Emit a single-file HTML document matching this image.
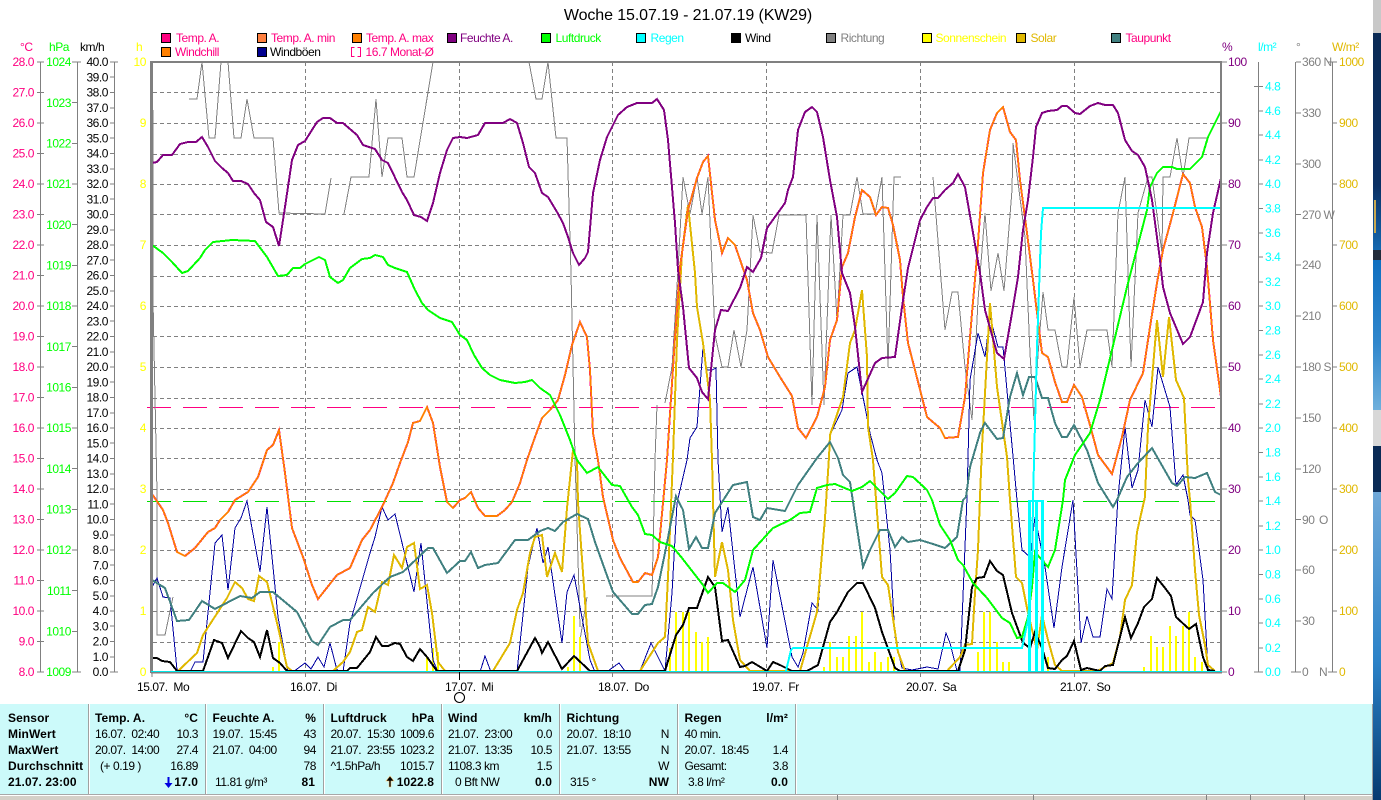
<!DOCTYPE html>
<html><head><meta charset="utf-8"><title>Woche 15.07.19 - 21.07.19 (KW29)</title>
<style>
html,body{margin:0;padding:0;background:#fff;overflow:hidden}
svg{display:block;font-family:"Liberation Sans",sans-serif;font-size:12px;letter-spacing:-.45px}
.l polyline,.l path,.c{shape-rendering:crispEdges}
polyline{fill:none}
.r{text-anchor:end}
.b{font-weight:bold;letter-spacing:.1px}
text{white-space:pre}
</style></head><body>
<svg width="1381" height="800" viewBox="0 0 1381 800" xmlns="http://www.w3.org/2000/svg">
<rect width="1381" height="800" fill="#fff"/>
<text x="688" y="20" text-anchor="middle" font-size="16" fill="#000" style="letter-spacing:-.1px">Woche 15.07.19 - 21.07.19 (KW29)</text>

<!-- legend -->
<g class="c" stroke="#000">
<rect x="161.5" y="33.5" width="9" height="9" fill="#ff0080"/><rect x="257.5" y="33.5" width="9" height="9" fill="#ff8040"/><rect x="352.5" y="33.5" width="9" height="9" fill="#ff8000"/><rect x="447.5" y="33.5" width="9" height="9" fill="#800080"/><rect x="541.5" y="33.5" width="9" height="9" fill="#00ff00"/><rect x="636.5" y="33.5" width="9" height="9" fill="#00ffff"/><rect x="731.5" y="33.5" width="9" height="9" fill="#000"/><rect x="826.5" y="33.5" width="9" height="9" fill="#808080"/><rect x="922.5" y="33.5" width="9" height="9" fill="#ffff00"/><rect x="1016.5" y="33.5" width="9" height="9" fill="#e0b800"/><rect x="1111.5" y="33.5" width="9" height="9" fill="#408080"/>
<rect x="161.5" y="47.5" width="9" height="9" fill="#ff8000"/><rect x="257.5" y="47.5" width="9" height="9" fill="#000090"/>
</g>
<path class="c" d="M354.5 47.5H351.5V56.5H354.5M357.5 47.5H360.5V56.5H357.5" fill="none" stroke="#ff0080"/>
<g>
<text x="176" y="42" fill="#ff0080">Temp. A.</text><text x="271" y="42" fill="#ff0080">Temp. A. min</text><text x="366" y="42" fill="#ff0080">Temp. A. max</text><text x="460" y="42" fill="#800080">Feuchte A.</text><text x="555.5" y="42" fill="#00ff00">Luftdruck</text><text x="650.5" y="42" fill="#00ffff">Regen</text><text x="745" y="42" fill="#000">Wind</text><text x="840.5" y="42" fill="#808080">Richtung</text><text x="935.5" y="42" fill="#ffff00">Sonnenschein</text><text x="1030.5" y="42" fill="#e0b800">Solar</text><text x="1125.5" y="42" fill="#ff0080">Taupunkt</text>
<text x="175" y="56" fill="#ff0080">Windchill</text><text x="270" y="56" fill="#000">Windböen</text><text x="365.5" y="56" fill="#ff0080">16.7 Monat-Ø</text>
</g>

<!-- units -->
<text x="20" y="51" fill="#ff0080">°C</text><text x="49" y="51" fill="#00ff00">hPa</text><text x="80" y="51" fill="#000">km/h</text><text x="136" y="51" fill="#ffff00">h</text>
<text x="1222" y="51" fill="#800080">%</text><text x="1258" y="51" fill="#00ffff">l/m²</text><text x="1296" y="51" fill="#808080">°</text><text x="1332" y="51" fill="#e0b800">W/m²</text>

<!-- left axes -->
<g class="l" fill="none" stroke="#808080">
<path stroke-width="1" d="M40.5 62V672M77.5 62V672M114.5 62V672"/>
<path stroke-width="1" d="M37 62h7M37 92.5h7M37 123h7M37 153.5h7M37 184h7M37 214.5h7M37 245h7M37 275.5h7M37 306h7M37 336.5h7M37 367h7M37 397.5h7M37 428h7M37 458.5h7M37 489h7M37 519.5h7M37 550h7M37 580.5h7M37 611h7M37 641.5h7M37 672h7"/>
<path stroke-width="1" d="M72 62h9M72 102.5h6M72 143.5h6M72 184h6M72 224.5h6M72 265.5h6M72 306h6M72 346.5h6M72 387.5h6M72 428h6M72 468.5h6M72 509.5h6M72 550h6M72 590.5h6M72 631.5h6M72 672h9"/>
<path stroke-width="1" d="M110 62h8M110 92.5h5M110 123h5M110 153.5h5M110 184h5M110 214.5h5M110 245h5M110 275.5h5M110 306h5M110 336.5h5M110 367h5M110 397.5h5M110 428h5M110 458.5h5M110 489h5M110 519.5h5M110 550h5M110 580.5h5M110 611h5M110 641.5h5M110 672h8M110 77h5M110 108h5M110 138h5M110 169h5M110 199h5M110 230h5M110 260h5M110 291h5M110 321h5M110 352h5M110 382h5M110 413h5M110 443h5M110 474h5M110 504h5M110 535h5M110 565h5M110 596h5M110 626h5M110 657h5"/>
</g>
<g class="r" fill="#ff0080">
<text x="34" y="66">28.0</text><text x="34" y="96.5">27.0</text><text x="34" y="127">26.0</text><text x="34" y="157.5">25.0</text><text x="34" y="188">24.0</text><text x="34" y="218.5">23.0</text><text x="34" y="249">22.0</text><text x="34" y="279.5">21.0</text><text x="34" y="310">20.0</text><text x="34" y="340.5">19.0</text><text x="34" y="371">18.0</text><text x="34" y="401.5">17.0</text><text x="34" y="432">16.0</text><text x="34" y="462.5">15.0</text><text x="34" y="493">14.0</text><text x="34" y="523.5">13.0</text><text x="34" y="554">12.0</text><text x="34" y="584.5">11.0</text><text x="34" y="615">10.0</text><text x="34" y="645.5">9.0</text><text x="34" y="676">8.0</text>
</g>
<g class="r" fill="#00ff00">
<text x="71" y="66">1024</text><text x="71" y="107">1023</text><text x="71" y="147.5">1022</text><text x="71" y="188">1021</text><text x="71" y="229">1020</text><text x="71" y="269.5">1019</text><text x="71" y="310">1018</text><text x="71" y="351">1017</text><text x="71" y="391.5">1016</text><text x="71" y="432">1015</text><text x="71" y="473">1014</text><text x="71" y="513.5">1013</text><text x="71" y="554">1012</text><text x="71" y="595">1011</text><text x="71" y="635.5">1010</text><text x="71" y="676">1009</text>
</g>
<g class="r" fill="#000">
<text x="108" y="66">40.0</text><text x="108" y="81.25">39.0</text><text x="108" y="96.5">38.0</text><text x="108" y="111.75">37.0</text><text x="108" y="127">36.0</text><text x="108" y="142.25">35.0</text><text x="108" y="157.5">34.0</text><text x="108" y="172.75">33.0</text><text x="108" y="188">32.0</text><text x="108" y="203.25">31.0</text><text x="108" y="218.5">30.0</text><text x="108" y="233.75">29.0</text><text x="108" y="249">28.0</text><text x="108" y="264.25">27.0</text><text x="108" y="279.5">26.0</text><text x="108" y="294.75">25.0</text><text x="108" y="310">24.0</text><text x="108" y="325.25">23.0</text><text x="108" y="340.5">22.0</text><text x="108" y="355.75">21.0</text><text x="108" y="371">20.0</text><text x="108" y="386.25">19.0</text><text x="108" y="401.5">18.0</text><text x="108" y="416.75">17.0</text><text x="108" y="432">16.0</text><text x="108" y="447.25">15.0</text><text x="108" y="462.5">14.0</text><text x="108" y="477.75">13.0</text><text x="108" y="493">12.0</text><text x="108" y="508.25">11.0</text><text x="108" y="523.5">10.0</text><text x="108" y="538.75">9.0</text><text x="108" y="554">8.0</text><text x="108" y="569.25">7.0</text><text x="108" y="584.5">6.0</text><text x="108" y="599.75">5.0</text><text x="108" y="615">4.0</text><text x="108" y="630.25">3.0</text><text x="108" y="645.5">2.0</text><text x="108" y="660.75">1.0</text><text x="108" y="676">0.0</text>
</g>
<g class="r" fill="#ffff00">
<text x="146" y="66">10</text><text x="146" y="127">9</text><text x="146" y="188">8</text><text x="146" y="249">7</text><text x="146" y="310">6</text><text x="146" y="371">5</text><text x="146" y="432">4</text><text x="146" y="493">3</text><text x="146" y="554">2</text><text x="146" y="615">1</text><text x="146" y="676">0</text>
</g>

<!-- grid -->
<g class="l" fill="none" stroke="#808080">
<path stroke-dasharray="4 3" d="M153 92.5H1221M153 123.5H1221M153 154.5H1221M153 184.5H1221M153 214.5H1221M153 245.5H1221M153 276.5H1221M153 306.5H1221M153 336.5H1221M153 367.5H1221M153 398.5H1221M153 428.5H1221M153 458.5H1221M153 489.5H1221M153 520.5H1221M153 550.5H1221M153 580.5H1221M153 611.5H1221M153 642.5H1221"/>
<path stroke-dasharray="4 3" d="M305.5 62V672M459.5 62V672M612.5 62V672M766.5 62V672M920.5 62V672M1074.5 62V672"/>
</g>
<g class="l" fill="none">
<path stroke="#ff0080" stroke-dasharray="24 12" d="M147 407.5H1221"/>
<path stroke="#00e000" stroke-dasharray="24 12" d="M147 501.5H1221"/>
</g>

<g class="l">
<!-- direction -->
<g stroke="#808080" stroke-width="1">
<polyline points="153,110 153,300 155,397 157,493 157,635 165,635 173,597"/>
<polyline points="189,99 197,99 202,62 209,138 215,138 221,62 228,62 234,138 241,138 247,99 254,138 273,138 279,213 325,214 331,178"/>
<polyline points="344,214 351,177 369,177 376,99 382,177 388,138 402,138 407,177 414,177 433,62"/>
<polyline points="529,62 536,99 542,99 548,62 556,138 567,138 571,273 575,457 580,627"/>
<polyline points="580,640 587,597"/>
<polyline points="606,596 652,596 655,460 657,405"/>
<polyline points="665,403 672,367 678,270 683,177 690,214 697,177 702,214 708,177 715,335 722,367 728,367 734,330 741,367 747,330 753,215 760,252 772,253 779,215 806,215 812,405 817,215 824,405 831,215 837,320 843,215 850,215 857,177 863,214 875,214 882,177 888,367 894,177 901,177"/>
<polyline points="933,177 945,330 952,292 958,292 965,367 972,420 978,300 985,213 991,291 998,253 1004,291 1012,190 1013,143 1025,237 1030,353 1034,420 1038,355 1043,292 1048,330 1055,330 1062,367 1067,367 1074,297 1080,367 1087,330 1107,330 1112,367 1118,213 1125,177 1131,367 1138,213 1148,177 1152,177 1162,253 1163,177 1170,177 1177,138 1183,177 1189,138 1208,138"/>
</g>
<!-- sunshine -->
<path stroke="#ffff00" stroke-width="2" fill="none" d="M273 672V667M279 672V642M427 672V657M433 672V648M438 672V652M568 672V667M574 672V616M580 672V637M670 672V648M676 672V612M683 672V612M689 672V612M696 672V632M702 672V642M708 672V637M824 672V667M830 672V642M837 672V657M843 672V657M849 672V636M856 672V636M862 672V612M869 672V662M875 672V652M881 672V662M888 672V657M894 672V657M978 672V652M984 672V612M990 672V612M997 672V642M1003 672V662M1009 672V662M1036 672V640M1048 672V657M1144 672V667M1151 672V636M1157 672V647M1163 672V647M1170 672V626M1176 672V636M1183 672V626M1189 672V612M1195 672V657M1202 672V662"/>
<!-- gusts -->
<polyline stroke="#0000a0" stroke-width="1" points="152,587 157,578 163,597 170,598 177,670 190,672 195,662 203,662 215,543 222,535 228,590 235,528 241,518 247,501 260,572 267,507 278,617 288,672 293,672 305,663 311,669 318,657 324,667 330,643 337,670 343,672 350,623 370,553 375,537 382,507 388,520 395,514 414,592 421,543 433,660 438,672 480,672 485,656 491,672 517,672 528,567 537,528 543,563 548,547 562,643 567,592 574,575 590,660 595,672 608,671 619,663 625,671 640,671 651,643 665,671 672,593 677,503 687,460 690,438 697,427 703,347 707,370 712,370 716,368 718,460 722,532 728,507 740,617 753,567 767,648 773,560 792,657 798,667 803,653 812,603 818,610 823,543 830,435 842,410 848,373 857,367 865,407 870,433 877,460 882,473 890,550 895,637 902,668 912,670 927,667 938,669 946,633 950,643 957,671 960,671 967,497 970,380 978,333 985,357 990,317 998,347 1003,347 1017,500 1022,550 1030,557 1035,517 1045,567 1054,628 1062,567 1073,500 1081,643 1087,616 1093,637 1100,637 1107,589 1112,599 1118,497 1125,427 1132,488 1138,470 1145,400 1152,427 1158,367 1170,407 1176,485 1183,475 1188,500 1190,515 1195,520 1203,580 1208,670 1215,672"/>
<!-- solar -->
<polyline stroke="#e0b800" stroke-width="2" points="178,671 197,653 203,635 227,598 235,582 242,588 248,599 254,601 259,576 267,582 278,627 287,667 292,671 333,671 343,662 350,652 357,632 362,630 368,607 375,612 382,582 388,585 394,555 402,568 407,547 414,543 420,589 427,585 432,613 438,662 445,671 493,671 510,643 517,610 523,593 530,553 535,537 542,535 547,577 555,553 562,572 567,508 573,450 577,460 578,503 588,643 598,671 640,671 658,643 665,637 668,577 673,457 677,340 682,253 688,205 695,273 697,307 703,343 710,400 712,460 715,577 722,542 728,570 733,620 740,660 750,671 800,671 817,612 825,518 829,457 830,435 843,397 850,343 855,330 862,290 867,357 868,427 873,460 882,577 888,585 898,652 905,671 947,671 960,657 965,645 972,644 975,593 978,550 980,497 982,447 990,303 997,387 1007,457 1010,500 1016,577 1022,583 1028,613 1037,650 1042,615 1048,640 1055,665 1062,671 1097,671 1113,663 1120,637 1125,600 1132,585 1137,532 1145,497 1148,427 1157,320 1163,377 1169,317 1176,380 1184,398 1188,480 1190,500 1195,570 1199,615 1205,645 1208,665 1215,671"/>
<!-- dew point -->
<polyline stroke="#408080" stroke-width="2" points="152,580 165,588 177,621 189,620 202,601 215,609 240,596 252,598 260,592 273,592 297,612 312,641 318,645 330,627 343,620 350,620 373,593 390,577 403,572 428,548 433,548 447,573 460,561 465,561 471,552 478,568 485,565 498,563 515,540 528,540 540,531 548,528 555,531 563,522 577,514 588,519 595,542 605,570 613,592 632,614 638,614 645,605 652,604 658,587 667,543 676,496 683,510 689,549 696,537 702,548 708,548 715,513 733,485 747,482 753,517 760,520 767,508 785,511 798,485 817,458 830,442 838,458 843,475 850,482 863,567 870,550 880,530 888,530 895,547 902,537 908,542 920,540 933,544 945,548 957,537 963,500 966,497 970,467 980,433 985,423 997,439 1003,438 1010,397 1017,373 1023,395 1029,377 1035,377 1042,398 1048,398 1055,423 1062,437 1067,437 1074,425 1087,450 1098,483 1113,507 1117,500 1127,477 1138,463 1152,448 1172,483 1177,486 1185,477 1195,478 1207,473 1215,492 1221,495"/>
<!-- wind -->
<polyline stroke="#000" stroke-width="2" points="152,658 157,658 162,661 170,662 177,671 203,671 214,640 222,643 228,658 241,631 248,638 254,642 260,657 267,630 273,658 280,663 287,671 347,671 350,668 357,668 370,652 376,637 382,646 388,646 395,643 400,644 407,657 413,661 420,649 427,657 437,671 517,671 535,638 540,647 542,653 548,642 562,669 574,656 590,671 650,671 665,671 676,635 683,625 689,608 697,608 708,577 715,587 722,641 728,640 740,667 745,666 752,662 767,671 773,662 780,665 792,671 807,671 818,665 830,622 837,612 848,592 857,583 863,583 875,608 882,632 895,668 900,671 958,671 965,650 972,587 977,578 984,577 990,561 997,571 1003,575 1012,613 1023,643 1030,648 1035,632 1042,648 1048,668 1055,669 1062,660 1067,656 1074,641 1081,670 1087,668 1100,671 1105,666 1113,665 1125,617 1131,638 1138,623 1144,607 1152,599 1157,578 1165,588 1171,596 1176,617 1189,629 1196,624 1203,657 1208,670 1215,671"/>
<!-- temperature -->
<polyline stroke="#ff0080" stroke-width="2" points="152,494 163,510 168,523 177,552 185,556 195,548 208,532 215,528 220,520 228,512 235,500 248,492 258,477 267,450 273,445 279,430 285,473 292,528 303,557 312,585 318,599 337,575 350,568 362,540 370,530 383,505 393,483 400,463 408,442 413,423 420,421 427,407 433,423 440,467 447,502 453,508 460,500 465,498 471,492 478,508 485,516 497,516 505,510 512,502 520,483 527,460 535,437 542,418 550,410 558,400 565,375 572,345 580,322 587,337 590,370 593,433 598,460 603,497 613,540 620,558 633,582 638,582 645,573 652,575 658,557 667,460 675,337 680,267 688,210 697,178 703,162 708,156 715,220 722,253 728,238 735,245 747,280 753,313 760,330 768,357 780,377 792,396 798,428 806,438 817,417 825,387 830,340 837,320 842,267 848,253 855,217 862,190 870,197 876,215 882,207 888,208 893,225 900,260 903,297 908,343 915,370 927,417 940,428 945,438 958,437 965,397 972,313 977,257 983,173 990,130 997,113 1003,107 1010,132 1016,140 1020,180 1027,233 1033,280 1042,353 1048,357 1055,382 1062,402 1067,402 1074,385 1082,397 1090,425 1098,455 1112,474 1122,437 1130,400 1143,373 1150,327 1157,283 1163,250 1173,213 1183,174 1190,183 1195,207 1202,227 1207,267 1213,340 1221,397"/>
<polyline stroke="#ff8000" stroke-width="1.6" points="152,494 163,510 168,523 177,552 185,556 195,548 208,532 215,528 220,520 228,512 235,500 248,492 258,477 267,450 273,445 279,430 285,473 292,528 303,557 312,585 318,599 337,575 350,568 362,540 370,530 383,505 393,483 400,463 408,442 413,423 420,421 427,407 433,423 440,467 447,502 453,508 460,500 465,498 471,492 478,508 485,516 497,516 505,510 512,502 520,483 527,460 535,437 542,418 550,410 558,400 565,375 572,345 580,322 587,337 590,370 593,433 598,460 603,497 613,540 620,558 633,582 638,582 645,573 652,575 658,557 667,460 675,337 680,267 688,210 697,178 703,162 708,156 715,220 722,253 728,238 735,245 747,280 753,313 760,330 768,357 780,377 792,396 798,428 806,438 817,417 825,387 830,340 837,320 842,267 848,253 855,217 862,190 870,197 876,215 882,207 888,208 893,225 900,260 903,297 908,343 915,370 927,417 940,428 945,438 958,437 965,397 972,313 977,257 983,173 990,130 997,113 1003,107 1010,132 1016,140 1020,180 1027,233 1033,280 1042,353 1048,357 1055,382 1062,402 1067,402 1074,385 1082,397 1090,425 1098,455 1112,474 1122,437 1130,400 1143,373 1150,327 1157,283 1163,250 1173,213 1183,174 1190,183 1195,207 1202,227 1207,267 1213,340 1221,397"/>
<!-- pressure -->
<polyline stroke="#00ff00" stroke-width="2" points="152,245 163,253 172,262 182,273 188,271 200,258 205,250 213,242 232,240 255,241 267,257 278,276 287,275 293,268 300,268 305,264 313,260 319,257 325,260 330,277 338,283 343,280 350,268 362,259 370,258 375,255 383,257 388,265 395,268 407,272 415,290 422,303 428,310 440,318 452,322 460,335 467,340 474,355 482,368 490,375 500,380 515,383 525,382 532,380 540,388 550,395 560,415 570,440 577,460 587,473 598,467 612,485 620,486 632,507 638,515 645,534 652,535 660,542 672,546 682,558 703,585 708,593 717,583 723,583 735,592 745,580 753,550 773,528 790,520 800,513 810,512 817,488 827,485 835,484 852,491 862,487 870,481 888,499 895,493 907,476 913,477 927,490 932,500 940,525 950,540 958,560 963,565 973,583 987,598 1002,618 1010,623 1017,638 1022,637 1028,617 1032,587 1035,552 1048,567 1055,550 1063,500 1065,480 1075,455 1090,433 1100,400 1112,350 1127,287 1147,210 1150,187 1157,173 1163,167 1172,167 1177,169 1190,169 1202,157 1208,137 1221,111"/>
<!-- humidity -->
<polyline stroke="#800080" stroke-width="2" points="152,163 157,162 163,155 172,155 180,144 188,142 196,142 202,137 208,147 215,161 222,168 228,173 233,181 241,181 248,184 254,193 260,200 266,222 273,227 279,246 285,207 292,160 298,145 305,141 317,122 323,118 330,118 337,123 343,123 357,135 363,145 375,149 382,160 388,163 402,192 407,200 414,215 421,217 427,221 433,203 440,173 447,150 453,138 460,137 467,138 478,135 485,123 503,123 510,119 517,123 523,143 529,167 535,173 542,193 548,197 557,212 563,223 568,237 573,253 579,265 585,258 588,252 593,193 600,160 607,137 618,115 627,107 637,103 652,103 657,99 664,110 668,140 675,223 678,270 683,307 689,368 697,378 702,392 708,399 715,330 721,310 728,311 740,288 747,267 753,272 761,258 767,228 785,203 788,190 793,177 798,130 805,112 812,107 817,112 823,137 830,180 837,217 842,273 850,293 855,327 862,392 875,363 882,358 895,357 902,307 908,268 920,220 927,207 933,198 938,198 945,190 953,183 958,174 965,187 972,227 980,273 985,310 997,353 1004,359 1012,313 1018,277 1023,230 1028,200 1033,157 1036,127 1042,113 1048,111 1057,110 1062,106 1067,106 1075,113 1080,114 1090,106 1098,103 1105,105 1113,105 1118,113 1125,140 1132,151 1138,155 1145,167 1152,200 1160,260 1163,287 1170,313 1183,344 1190,337 1203,302 1207,253 1213,213 1221,178"/>
<!-- rain -->
<polyline stroke="#00ffff" stroke-width="2" points="786,671 791,650 793,648 1022,648 1028,620 1032,570 1033,500 1037,347 1041,233 1043,208 1221,208"/>
<path stroke="#00ffff" stroke-width="3" fill="none" d="M1029.5 672V500M1036.5 672V500M1042.5 672V500"/>
<path stroke="#00ffff" stroke-width="2" fill="none" d="M1029 501H1043"/>
</g>

<!-- frame -->
<g class="c">
<rect x="151" y="61" width="1071" height="2" fill="#808080"/>
<rect x="150" y="61" width="3" height="612" fill="#808080"/>
<rect x="1220" y="61" width="2" height="612" fill="#808080"/>
<rect x="151" y="672" width="1071" height="1.5" fill="#808080"/>
<rect x="151" y="671" width="1071" height="1" fill="#00e8e8"/>
</g>
<path class="c" stroke="#808080" fill="none" d="M152 673v4M305.5 673v4M612.5 673v4M766.5 673v4M920.5 673v4M1074.5 673v4"/>
<path class="c" stroke="#000" fill="none" d="M459.5 672v8"/>
<circle cx="459.5" cy="697.5" r="5" fill="none" stroke="#000" stroke-width="1.1"/>
<g fill="#000">
<text x="137" y="691">15.07.  Mo</text><text x="290" y="691">16.07.  Di</text><text x="445" y="691">17.07.  Mi</text><text x="598" y="691">18.07.  Do</text><text x="752" y="691">19.07.  Fr</text><text x="906" y="691">20.07.  Sa</text><text x="1060" y="691">21.07.  So</text>
</g>

<!-- right axes -->
<g class="l" fill="none" stroke="#808080">
<path d="M1222 62h5M1222 123h5M1222 184h5M1222 245h5M1222 306h5M1222 367h5M1222 428h5M1222 489h5M1222 550h5M1222 611h5M1222 672h5"/>
<path d="M1258.5 62V672M1254 86.5h9M1258 111h5M1258 135h5M1258 160h5M1258 184h5M1258 208.5h5M1258 233h5M1258 257h5M1258 282h5M1258 306h5M1258 330.5h5M1258 355h5M1258 379h5M1258 404h5M1258 428h5M1258 452.5h5M1258 477h5M1258 501h5M1258 526h5M1258 550h5M1258 574.5h5M1258 599h5M1258 623h5M1258 648h5M1254 672h9"/>
<path d="M1295.5 62V672M1296 62h5M1296 113h5M1296 164h5M1296 214.5h5M1296 265h5M1296 316h5M1296 367h5M1296 418h5M1296 469h5M1296 519.5h5M1296 570h5M1296 621h5M1291 672h10"/>
<path d="M1332.5 62V672M1328 62h9M1333 123h4M1333 184h4M1333 245h4M1333 306h4M1333 367h4M1333 428h4M1333 489h4M1333 550h4M1333 611h4M1328 672h9"/>
</g>
<g fill="#800080">
<text x="1228" y="66">100</text><text x="1228" y="127">90</text><text x="1228" y="188">80</text><text x="1228" y="249">70</text><text x="1228" y="310">60</text><text x="1228" y="371">50</text><text x="1228" y="432">40</text><text x="1228" y="493">30</text><text x="1228" y="554">20</text><text x="1228" y="615">10</text><text x="1228" y="676">0</text>
</g>
<g fill="#00ffff">
<text x="1265" y="90.5">4.8</text><text x="1265" y="115">4.6</text><text x="1265" y="139">4.4</text><text x="1265" y="164">4.2</text><text x="1265" y="188">4.0</text><text x="1265" y="212.5">3.8</text><text x="1265" y="237">3.6</text><text x="1265" y="261">3.4</text><text x="1265" y="286">3.2</text><text x="1265" y="310">3.0</text><text x="1265" y="334.5">2.8</text><text x="1265" y="359">2.6</text><text x="1265" y="383">2.4</text><text x="1265" y="408">2.2</text><text x="1265" y="432">2.0</text><text x="1265" y="456.5">1.8</text><text x="1265" y="481">1.6</text><text x="1265" y="505">1.4</text><text x="1265" y="530">1.2</text><text x="1265" y="554">1.0</text><text x="1265" y="578.5">0.8</text><text x="1265" y="603">0.6</text><text x="1265" y="627">0.4</text><text x="1265" y="652">0.2</text><text x="1265" y="676">0.0</text>
</g>
<g fill="#808080">
<text x="1302" y="66">360 N</text><text x="1302" y="117">330</text><text x="1302" y="168">300</text><text x="1302" y="219">270 W</text><text x="1302" y="269">240</text><text x="1302" y="320">210</text><text x="1302" y="371">180 S</text><text x="1302" y="422">150</text><text x="1302" y="473">120</text><text x="1302" y="524">90</text><text x="1319" y="524">O</text><text x="1302" y="574">60</text><text x="1302" y="625">30</text><text x="1302" y="676">0</text><text x="1319" y="676">N</text>
</g>
<g fill="#e0b800">
<text x="1339" y="66">1000</text><text x="1339" y="127">900</text><text x="1339" y="188">800</text><text x="1339" y="249">700</text><text x="1339" y="310">600</text><text x="1339" y="371">500</text><text x="1339" y="432">400</text><text x="1339" y="493">300</text><text x="1339" y="554">200</text><text x="1339" y="615">100</text><text x="1339" y="676">0</text>
</g>

<!-- bottom panel -->
<rect class="c" x="0" y="704" width="1372" height="90" fill="#ccfafa"/>
<g class="c">
<rect x="1372" y="704" width="1" height="96" fill="#a0a0a0"/>
<rect x="88" y="704" width="1" height="90" fill="#a0a0a0"/><rect x="89" y="704" width="1" height="90" fill="#fff"/>
<rect x="205" y="704" width="1" height="90" fill="#a0a0a0"/><rect x="206" y="704" width="1" height="90" fill="#fff"/>
<rect x="323" y="704" width="1" height="90" fill="#a0a0a0"/><rect x="324" y="704" width="1" height="90" fill="#fff"/>
<rect x="441" y="704" width="1" height="90" fill="#a0a0a0"/><rect x="442" y="704" width="1" height="90" fill="#fff"/>
<rect x="559" y="704" width="1" height="90" fill="#a0a0a0"/><rect x="560" y="704" width="1" height="90" fill="#fff"/>
<rect x="677" y="704" width="1" height="90" fill="#a0a0a0"/><rect x="678" y="704" width="1" height="90" fill="#fff"/>
<rect x="795" y="704" width="1" height="90" fill="#a0a0a0"/><rect x="796" y="704" width="1" height="90" fill="#fff"/>
<rect x="0" y="794" width="1372" height="1" fill="#a8a8a8"/>
<rect x="0" y="795" width="1372" height="1" fill="#fff"/>
<rect x="0" y="796" width="1372" height="4" fill="#d4d0c8"/>
<rect x="837" y="795" width="1" height="5" fill="#808080"/><rect x="1033" y="795" width="1" height="5" fill="#808080"/><rect x="1206" y="795" width="1" height="5" fill="#808080"/><rect x="1250" y="795" width="1" height="5" fill="#808080"/><rect x="1304" y="795" width="1" height="5" fill="#808080"/>
</g>
<g fill="#000">
<g class="b">
<text x="8" y="722">Sensor</text><text x="8" y="738">MinWert</text><text x="8" y="754">MaxWert</text><text x="8" y="770">Durchschnitt</text><text x="8" y="786">21.07. 23:00</text>
<text x="95" y="722">Temp. A.</text><text class="r" x="198" y="722">°C</text><text class="r" x="198" y="786">17.0</text>
<text x="212.5" y="722">Feuchte A.</text><text class="r" x="316" y="722">%</text><text class="r" x="315" y="786">81</text>
<text x="330.5" y="722">Luftdruck</text><text class="r" x="434" y="722">hPa</text><text class="r" x="434" y="786">1022.8</text>
<text x="448" y="722">Wind</text><text class="r" x="552" y="722">km/h</text><text class="r" x="552" y="786">0.0</text>
<text x="566.5" y="722">Richtung</text><text class="r" x="669" y="786">NW</text>
<text x="684.5" y="722">Regen</text><text class="r" x="788" y="722">l/m²</text><text class="r" x="788" y="786">0.0</text>
</g>
<text x="95" y="738">16.07.  02:40</text><text class="r" x="198" y="738">10.3</text>
<text x="95" y="754">20.07.  14:00</text><text class="r" x="198" y="754">27.4</text>
<text x="100" y="770">(+ 0.19 )</text><text class="r" x="198" y="770">16.89</text>
<text x="212.5" y="738">19.07.  15:45</text><text class="r" x="316" y="738">43</text>
<text x="212.5" y="754">21.07.  04:00</text><text class="r" x="316" y="754">94</text>
<text class="r" x="316" y="770">78</text>
<text x="215" y="786">11.81 g/m³</text>
<text x="330.5" y="738">20.07.  15:30</text><text class="r" x="434" y="738">1009.6</text>
<text x="330.5" y="754">21.07.  23:55</text><text class="r" x="434" y="754">1023.2</text>
<text x="330.5" y="770">^1.5hPa/h</text><text class="r" x="434" y="770">1015.7</text>
<text x="448" y="738">21.07.  23:00</text><text class="r" x="552" y="738">0.0</text>
<text x="448" y="754">21.07.  13:35</text><text class="r" x="552" y="754">10.5</text>
<text x="448" y="770">1108.3 km</text><text class="r" x="552" y="770">1.5</text>
<text x="455" y="786">0 Bft NW</text>
<text x="566.5" y="738">20.07.  18:10</text><text class="r" x="669" y="738">N</text>
<text x="566.5" y="754">21.07.  13:55</text><text class="r" x="669" y="754">N</text>
<text class="r" x="669" y="770">W</text>
<text x="570" y="786">315 °</text>
<text x="684.5" y="738">40 min.</text>
<text x="684.5" y="754">20.07.  18:45</text><text class="r" x="788" y="754">1.4</text>
<text x="684.5" y="770">Gesamt:</text><text class="r" x="788" y="770">3.8</text>
<text x="688" y="786">3.8 l/m²</text>
</g>
<path d="M167.5 777h2v6h3l-4 5-4-5h3z" fill="#0000e0"/>
<path d="M389 787h2v-6h3l-4-5-4 5h3z" fill="#000" stroke="#ffd080" stroke-width=".6"/>

<!-- desktop strip -->
<defs>
<linearGradient id="g1" x1="0" y1="0" x2="0" y2="1"><stop offset="0" stop-color="#0a2a55"/><stop offset=".7" stop-color="#0a2f63"/><stop offset="1" stop-color="#1468b0"/></linearGradient>
<linearGradient id="g2" x1="0" y1="0" x2="0" y2="1"><stop offset="0" stop-color="#0f6fc0"/><stop offset=".55" stop-color="#2f86cc"/><stop offset="1" stop-color="#6fb0dc"/></linearGradient>
<linearGradient id="g3" x1="0" y1="0" x2="0" y2="1"><stop offset="0" stop-color="#6fa8d8"/><stop offset=".55" stop-color="#2b82c8"/><stop offset="1" stop-color="#053a70"/></linearGradient>
</defs>
<g class="c">
<rect x="1373" y="0" width="8" height="800" fill="#0e5ea8"/>
<rect x="1373" y="0" width="8" height="33" fill="#c8c8c8"/>
<rect x="1373" y="33" width="8" height="217" fill="url(#g1)"/>
<rect x="1374" y="200" width="2" height="33" fill="#c8a850"/>
<rect x="1373" y="250" width="8" height="10" fill="#202a3a"/>
<rect x="1373" y="260" width="8" height="150" fill="url(#g2)"/>
<rect x="1373" y="410" width="8" height="36" fill="#d8d8d8"/>
<rect x="1373" y="446" width="8" height="46" fill="#0a2a55"/>
<rect x="1373" y="492" width="8" height="308" fill="url(#g3)"/>
</g>
</svg>
</body></html>
